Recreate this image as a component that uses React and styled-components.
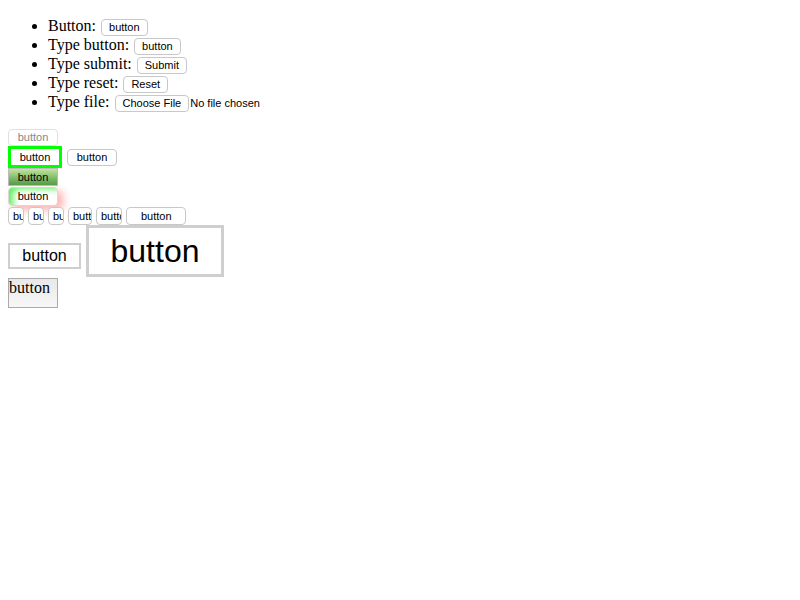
import React from 'react';
import styled, { createGlobalStyle } from 'styled-components';

const GlobalStyle = createGlobalStyle`
  body {
    margin: 0;
    padding: 0 8px 8px;
    font-family: "Liberation Serif", "Times New Roman", serif;
    font-size: 16px;
    color: #000;
    background: #fff;
  }
`

const List = styled.ul`
  margin: 16px 0 18px;
  padding-left: 40px;
  li {
    height: 19px;
    line-height: 19px;
  }
`

const Btn = styled.button`
  font-family: "Liberation Sans", Arial, sans-serif;
  font-size: 11px;
  line-height: 13px;
  height: 17px;
  padding: 1px 7px;
  margin: 0 1px;
  background: #fff;
  color: ${p => (p.disabled ? '#888' : '#000')};
  border: 1px solid ${p => (p.disabled ? '#e0e0e0' : '#c8c8c8')};
  border-radius: 4px;
  vertical-align: middle;
  cursor: default;
`

const FileText = styled.span`
  font-family: "Liberation Sans", Arial, sans-serif;
  font-size: 11px;
  vertical-align: middle;
`

const Stack = styled.div`
  display: flex;
  flex-direction: column;
  align-items: flex-start;
  gap: 1px;
`

const Row = styled.div`
  display: flex;
  align-items: ${p => p.$align || 'center'};
  gap: ${p => p.$gap || 4}px;
  margin-top: ${p => p.$mt || 0}px;
`

const Plain = styled(Btn)`
  margin: 0;
  width: 50px;
  padding: 0;
`

const Outlined = styled(Btn)`
  margin: 0;
  width: 54px;
  height: 22px;
  padding: 0;
  border: 3px solid #00ff00;
  border-radius: 0;
`

const Gradient = styled(Btn)`
  margin: -1px 0 0;
  width: 50px;
  height: 18px;
  padding: 0;
  border-radius: 0;
  border: 1px solid #bbb;
  background: linear-gradient(#c2e59c, #4e9a45);
`

const Glow = styled(Btn)`
  margin: 0;
  width: 50px;
  height: 19px;
  padding: 0;
  border: 1px solid #d8d8d8;
  box-shadow: inset 7px 4px 6px -3px #5cf25c, 5px 4px 8px #ffb0b0;
`

const Narrow = styled(Btn)`
  margin: 0;
  width: ${p => p.$w}px;
  height: 18px;
  padding: 0 0 0 ${p => p.$pad || 4}px;
  overflow: hidden;
  white-space: nowrap;
  text-align: left;
`

const Large = styled(Btn)`
  box-sizing: border-box;
  margin: 0 0 ${p => p.$mb || 0}px;
  font-size: ${p => p.$size}px;
  line-height: ${p => p.$size + 4}px;
  width: ${p => p.$w}px;
  height: ${p => p.$h}px;
  padding: 0;
  border: ${p => p.$bw}px solid #cfcfcf;
  border-radius: 0;
`

const SerifBtn = styled.button`
  font-family: "Liberation Serif", "Times New Roman", serif;
  font-size: 16px;
  width: 50px;
  height: 30px;
  padding: 0;
  margin: 0;
  display: flex;
  align-items: flex-start;
  line-height: 18px;
  border: 1px solid #aaa;
  background: linear-gradient(#e9e9e9, #f7f7f7);
  color: #000;
`

export default function App() {
  return (
    <>
      <GlobalStyle />
      <List>
        <li>Button: <Btn>button</Btn></li>
        <li>Type button: <Btn type="button">button</Btn></li>
        <li>Type submit: <Btn type="submit">Submit</Btn></li>
        <li>Type reset: <Btn type="reset">Reset</Btn></li>
        <li>Type file: <Btn>Choose File</Btn><FileText>No file chosen</FileText></li>
      </List>
      <Stack>
        <Plain disabled>button</Plain>
        <Row $gap={5} $mt={-1}>
          <Outlined>button</Outlined>
          <Plain>button</Plain>
        </Row>
        <Gradient>button</Gradient>
        <Glow>button</Glow>
        <Row $gap={4}>
          <Narrow $w={16}>button</Narrow>
          <Narrow $w={16}>button</Narrow>
          <Narrow $w={16}>button</Narrow>
          <Narrow $w={24}>button</Narrow>
          <Narrow $w={26}>button</Narrow>
          <Narrow $w={60} $pad={14}>button</Narrow>
        </Row>
        <Row $align="flex-end" $gap={5} $mt={-1}>
          <Large $size={16} $w={73} $h={26} $bw={2} $mb={8}>button</Large>
          <Large $size={32} $w={138} $h={52} $bw={3}>button</Large>
        </Row>
        <SerifBtn>button</SerifBtn>
      </Stack>
    </>
  );
}
